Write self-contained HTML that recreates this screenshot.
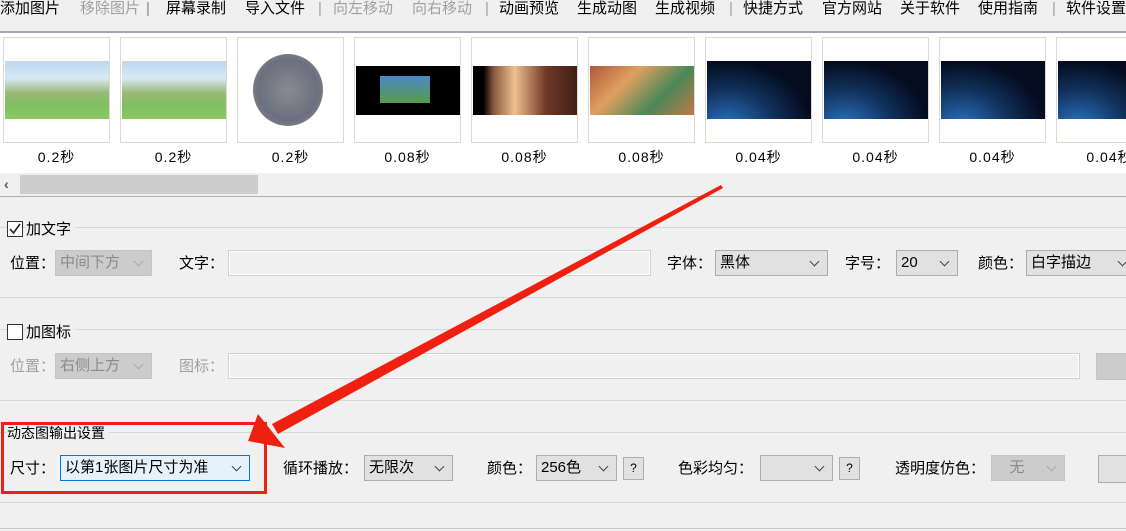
<!DOCTYPE html>
<html><head><meta charset="utf-8"><style>
*{margin:0;padding:0;box-sizing:border-box}
body{width:1126px;height:531px;background:#f0f0f0;position:relative;overflow:hidden;font-family:"Liberation Sans","Noto Sans CJK SC",sans-serif;font-size:15px;color:#000}
.a{position:absolute;white-space:nowrap;line-height:18px}
.dis{color:#a0a0a0}
.th{position:absolute;top:37px;width:107px;height:106px;background:#fff;border:1px solid #ddd8d0}
.lbl{position:absolute;top:147px;width:107px;text-align:center;font-size:14px;letter-spacing:1px}
.hl{position:absolute;left:0;width:1126px;height:1px;background:#d8d8d8}
.sel{position:absolute;height:26px;border:1px solid #adadad;background:#e1e1e1;padding:2px 4px;font-size:15px;line-height:20px}
.sel::after{content:"";position:absolute;right:9px;top:7px;width:6px;height:6px;border-right:1.3px solid #444;border-bottom:1.3px solid #444;transform:rotate(45deg)}
.sel.d{background:#cccccc;border-color:#c4c4c4;color:#8a8a8a}
.sel.d::after{border-color:#a8a8a8}
.inp{position:absolute;height:26px;border:1px solid #d0d0d0;background:#f0f0f0;box-shadow:inset 0 0 0 1px #fff}
.q{position:absolute;width:21px;height:23px;border:1px solid #adadad;background:#e1e1e1;text-align:center;font-size:12px;line-height:21px}
.cb{position:absolute;width:16px;height:16px;border:1px solid #333;background:#fff}
</style></head><body>
<div class="a" style="left:0;top:0">添加图片</div>
<div class="a dis" style="left:80px;top:0">移除图片</div>
<div class="a" style="left:146px;top:0;color:#888">|</div>
<div class="a" style="left:166px;top:0">屏幕录制</div>
<div class="a" style="left:245px;top:0">导入文件</div>
<div class="a dis" style="left:318px;top:0">|</div>
<div class="a dis" style="left:333px;top:0">向左移动</div>
<div class="a dis" style="left:412px;top:0">向右移动</div>
<div class="a dis" style="left:485px;top:0">|</div>
<div class="a" style="left:499px;top:0">动画预览</div>
<div class="a" style="left:577px;top:0">生成动图</div>
<div class="a" style="left:655px;top:0">生成视频</div>
<div class="a dis" style="left:729px;top:0">|</div>
<div class="a" style="left:743px;top:0">快捷方式</div>
<div class="a" style="left:822px;top:0">官方网站</div>
<div class="a" style="left:900px;top:0">关于软件</div>
<div class="a" style="left:978px;top:0">使用指南</div>
<div class="a dis" style="left:1052px;top:0">|</div>
<div class="a" style="left:1066px;top:0">软件设置</div>
<div class="hl" style="top:31px;background:#a0a7b4;height:2px"></div>
<div style="position:absolute;left:0;top:33px;width:1126px;height:140px;background:#fff"></div>

<div class="th" style="left:3px"><div style="position:absolute;left:1px;top:23px;width:104px;height:58px;background:linear-gradient(#bcd8f0 0,#d8e8f4 30%,#9ab878 55%,#7fc060 75%,#8cc860 100%)"></div></div>
<div class="th" style="left:120px"><div style="position:absolute;left:1px;top:23px;width:104px;height:58px;background:linear-gradient(#bcd8f0 0,#d8e8f4 30%,#9ab878 55%,#7fc060 75%,#8cc860 100%)"></div></div>
<div class="th" style="left:237px"><div style="position:absolute;left:15px;top:16px;width:70px;height:72px;border-radius:50%;background:radial-gradient(#8a8a90,#6a7080 60%,#a09888)"></div></div>
<div class="th" style="left:354px"><div style="position:absolute;left:1px;top:28px;width:104px;height:49px;background:#000"></div><div style="position:absolute;left:25px;top:38px;width:50px;height:27px;background:linear-gradient(#4a88c8,#5a9a48)"></div></div>
<div class="th" style="left:471px"><div style="position:absolute;left:1px;top:28px;width:104px;height:49px;background:linear-gradient(90deg,#000 10%,#8a5a40 20%,#f0c090 40%,#703828 70%,#402018)"></div></div>
<div class="th" style="left:588px"><div style="position:absolute;left:1px;top:28px;width:104px;height:49px;background:linear-gradient(135deg,#b05838,#e0a060,#4a8858,#c07848)"></div></div>
<div class="th" style="left:705px"><div style="position:absolute;left:1px;top:23px;width:104px;height:58px;background:radial-gradient(ellipse at 20% 110%,#2a70c0 0,#10305a 40%,#040c20 70%)"></div></div>
<div class="th" style="left:822px"><div style="position:absolute;left:1px;top:23px;width:104px;height:58px;background:radial-gradient(ellipse at 20% 110%,#2a70c0 0,#10305a 40%,#040c20 70%)"></div></div>
<div class="th" style="left:939px"><div style="position:absolute;left:1px;top:23px;width:104px;height:58px;background:radial-gradient(ellipse at 20% 110%,#2a70c0 0,#10305a 40%,#040c20 70%)"></div></div>
<div class="th" style="left:1056px"><div style="position:absolute;left:1px;top:23px;width:104px;height:58px;background:radial-gradient(ellipse at 20% 110%,#2a70c0 0,#10305a 40%,#040c20 70%)"></div></div>
<div class="lbl" style="left:3px">0.2秒</div><div class="lbl" style="left:120px">0.2秒</div><div class="lbl" style="left:237px">0.2秒</div><div class="lbl" style="left:354px">0.08秒</div><div class="lbl" style="left:471px">0.08秒</div><div class="lbl" style="left:588px">0.08秒</div><div class="lbl" style="left:705px">0.04秒</div><div class="lbl" style="left:822px">0.04秒</div><div class="lbl" style="left:939px">0.04秒</div><div class="lbl" style="left:1056px">0.04秒</div>

<div style="position:absolute;left:0;top:173px;width:1126px;height:21px;background:#f0f0f0"></div>
<div class="a" style="left:4px;top:175px;font-size:14px;color:#555;font-weight:bold">‹</div>
<div style="position:absolute;left:20px;top:175px;width:238px;height:19px;background:#cdcdcd"></div>
<div class="hl" style="top:196px;background:#b0b0b0"></div>

<div class="hl" style="top:227px"></div>
<div class="cb" style="left:7px;top:221px"><svg width="14" height="14"><path d="M2 7 L5.5 11 L12 2" stroke="#222" stroke-width="1.6" fill="none"/></svg></div>
<div class="a" style="left:26px;top:221px;background:#f0f0f0;padding-right:4px">加文字</div>
<div class="a" style="left:10px;top:255px">位置：</div>
<div class="sel d" style="left:55px;top:250px;width:97px">中间下方</div>
<div class="a" style="left:179px;top:255px">文字：</div>
<div class="inp" style="left:228px;top:250px;width:423px"></div>
<div class="a" style="left:667px;top:255px">字体：</div>
<div class="sel" style="left:715px;top:250px;width:113px">黑体</div>
<div class="a" style="left:845px;top:255px">字号：</div>
<div class="sel" style="left:896px;top:250px;width:62px">20</div>
<div class="a" style="left:978px;top:255px">颜色：</div>
<div class="sel" style="left:1026px;top:250px;width:110px">白字描边</div>
<div class="hl" style="top:297px"></div>

<div class="hl" style="top:329px"></div>
<div class="cb" style="left:7px;top:324px"></div>
<div class="a" style="left:26px;top:324px;background:#f0f0f0;padding-right:4px">加图标</div>
<div class="a dis" style="left:10px;top:358px">位置：</div>
<div class="sel d" style="left:55px;top:353px;width:97px">右侧上方</div>
<div class="a dis" style="left:179px;top:358px">图标：</div>
<div class="inp" style="left:228px;top:353px;width:852px"></div>
<div style="position:absolute;left:1096px;top:353px;width:40px;height:27px;background:#cccccc;border:1px solid #c4c4c4"></div>
<div class="hl" style="top:400px"></div>

<div class="hl" style="top:432px"></div>
<div class="a" style="left:7px;top:424px;background:#f0f0f0;padding-right:4px;font-size:14px">动态图输出设置</div>
<div class="a" style="left:10px;top:460px">尺寸：</div>
<div class="sel" style="left:60px;top:455px;width:190px;background:#e5f1fb;border-color:#0078d7">以第1张图片尺寸为准</div>
<div class="a" style="left:283px;top:460px">循环播放：</div>
<div class="sel" style="left:364px;top:455px;width:89px">无限次</div>
<div class="a" style="left:487px;top:460px">颜色：</div>
<div class="sel" style="left:536px;top:455px;width:81px">256色</div>
<div class="q" style="left:623px;top:457px">?</div>
<div class="a" style="left:678px;top:460px">色彩均匀：</div>
<div class="sel" style="left:760px;top:455px;width:73px"></div>
<div class="q" style="left:839px;top:457px">?</div>
<div class="a" style="left:895px;top:460px">透明度仿色：</div>
<div class="sel d" style="left:991px;top:455px;width:74px;text-align:center;padding-right:26px">无</div>
<div style="position:absolute;left:1098px;top:455px;width:40px;height:28px;background:#e1e1e1;border:1px solid #adadad"></div>
<div class="hl" style="top:502px"></div>
<div class="hl" style="top:528px;background:#c8c8c8"></div>

<svg style="position:absolute;left:0;top:0" width="1126" height="531">
<rect x="2.5" y="423.5" width="263" height="69" fill="none" stroke="#f02010" stroke-width="3"/>
<polygon points="721,185 723,188 278,434 272,424" fill="#f02010"/>
<polygon points="248,441 258,414 285,448" fill="#f02010"/>
</svg>
</body></html>
